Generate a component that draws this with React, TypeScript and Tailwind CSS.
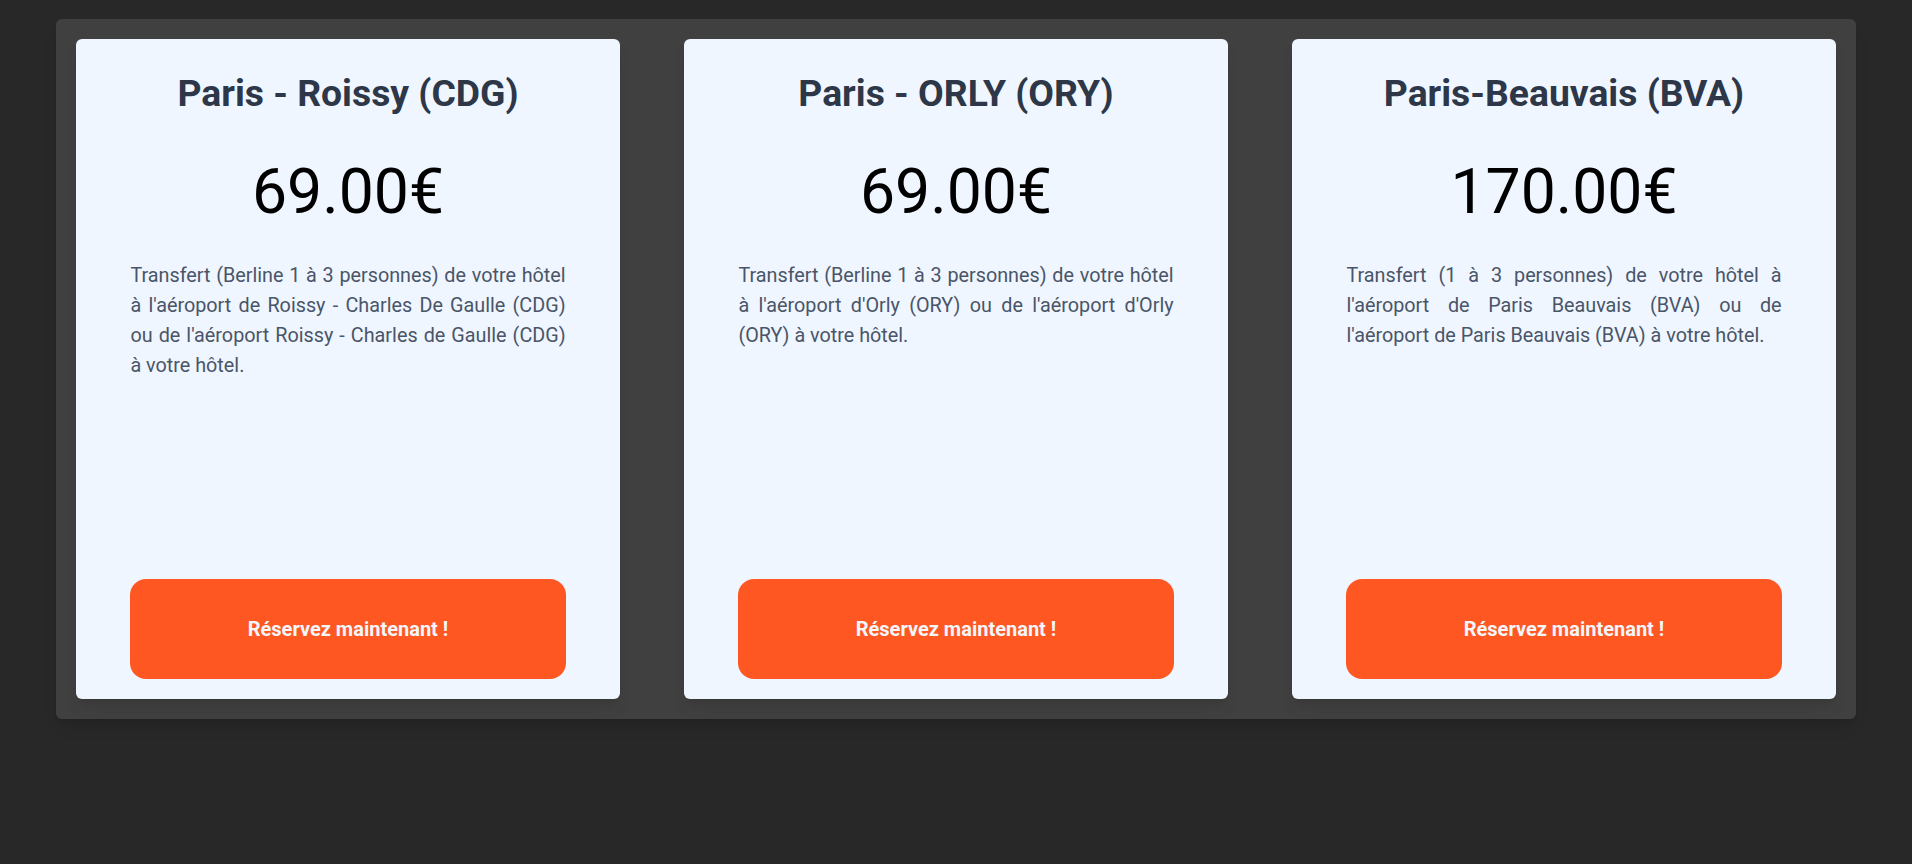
const offers = [
  {
    id: 'cdg',
    title: 'Paris - Roissy (CDG)',
    price: '69.00€',
    text: "Transfert (Berline 1 à 3 personnes) de votre hôtel à l'aéroport de Roissy - Charles De Gaulle (CDG) ou de l'aéroport Roissy - Charles de Gaulle (CDG) à votre hôtel.",
  },
  {
    id: 'ory',
    title: 'Paris - ORLY (ORY)',
    price: '69.00€',
    text: "Transfert (Berline 1 à 3 personnes) de votre hôtel à l'aéroport d'Orly (ORY) ou de l'aéroport d'Orly (ORY) à votre hôtel.",
  },
  {
    id: 'bva',
    title: 'Paris-Beauvais (BVA)',
    price: '170.00€',
    text: "Transfert (1 à 3 personnes) de votre hôtel à l'aéroport de Paris Beauvais (BVA) ou de l'aéroport de Paris Beauvais (BVA) à votre hôtel.",
  },
];

export default function App() {
  return (
    <div className="min-h-screen bg-[#282828] pt-[19px] px-[56px] font-['Roboto',_'Liberation_Sans',_sans-serif]">
      <section className="bg-[#404040] rounded-md p-5 shadow-lg">
        <div className="grid grid-cols-3 gap-16">
          {offers.map(offer => (
            <div
              key={offer.id}
              className="h-[660px] flex flex-col bg-[#eff6ff] rounded-md shadow-lg"
            >
              <h2 className="pt-[34px] text-center text-[37.3px] leading-10 font-bold text-[#2d3748]">
                {offer.title}
              </h2>
              <div className="mt-12 text-center text-[62.5px] leading-none text-black">
                {offer.price}
              </div>
              <p className="mt-[37px] w-4/5 mx-auto text-justify text-[19.8px] leading-[30px] text-[#4a5568]">
                {offer.text}
              </p>

              <button className="mt-auto mb-5 w-4/5 mx-auto h-[100px] rounded-2xl bg-[#ff5722] text-[20px] font-bold text-[#f4f6fa]">
                Réservez maintenant !
              </button>
            </div>
          ))}
        </div>
      </section>
    </div>
  );
}
